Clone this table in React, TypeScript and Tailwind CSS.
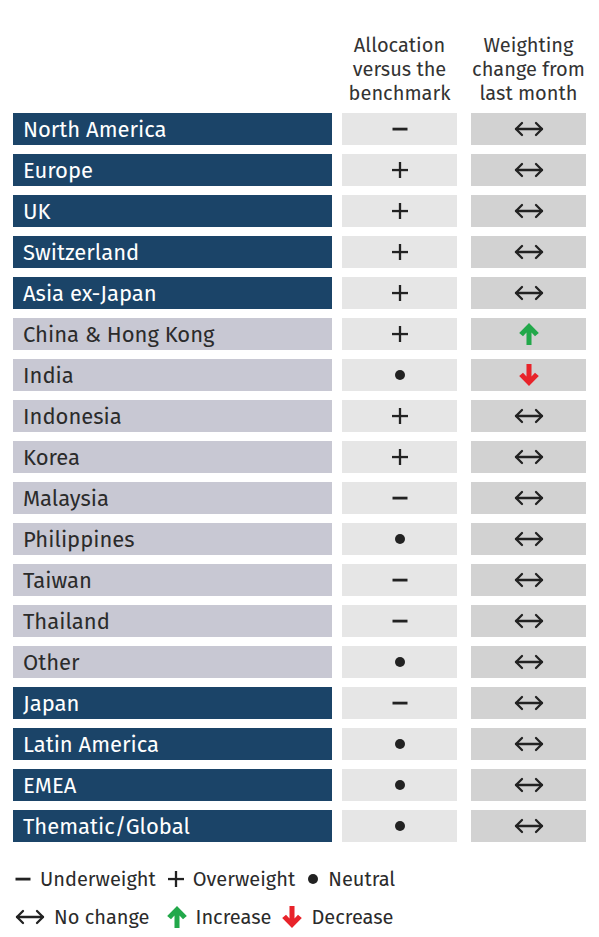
import React from "react";

type Row = { name: string; dark: boolean; alloc: "-" | "+" | "."; change: "n" | "u" | "d" };

const rows: Row[] = [
  { name: "North America", dark: true, alloc: "-", change: "n" },
  { name: "Europe", dark: true, alloc: "+", change: "n" },
  { name: "UK", dark: true, alloc: "+", change: "n" },
  { name: "Switzerland", dark: true, alloc: "+", change: "n" },
  { name: "Asia ex-Japan", dark: true, alloc: "+", change: "n" },
  { name: "China & Hong Kong", dark: false, alloc: "+", change: "u" },
  { name: "India", dark: false, alloc: ".", change: "d" },
  { name: "Indonesia", dark: false, alloc: "+", change: "n" },
  { name: "Korea", dark: false, alloc: "+", change: "n" },
  { name: "Malaysia", dark: false, alloc: "-", change: "n" },
  { name: "Philippines", dark: false, alloc: ".", change: "n" },
  { name: "Taiwan", dark: false, alloc: "-", change: "n" },
  { name: "Thailand", dark: false, alloc: "-", change: "n" },
  { name: "Other", dark: false, alloc: ".", change: "n" },
  { name: "Japan", dark: true, alloc: "-", change: "n" },
  { name: "Latin America", dark: true, alloc: ".", change: "n" },
  { name: "EMEA", dark: true, alloc: ".", change: "n" },
  { name: "Thematic/Global", dark: true, alloc: ".", change: "n" },
];

const Minus = () => (
  <svg width="16" height="16" viewBox="0 0 16 16"><rect x="0.5" y="6.7" width="15" height="2.8" fill="#222" /></svg>
);
const Plus = () => (
  <svg width="18" height="18" viewBox="0 0 18 18">
    <rect x="1" y="7.9" width="16" height="2.3" fill="#222" />
    <rect x="7.85" y="1" width="2.3" height="16" fill="#222" />
  </svg>
);
const Dot = () => (
  <svg width="12" height="12" viewBox="0 0 12 12"><circle cx="6" cy="6" r="5" fill="#222" /></svg>
);
const NoChange = () => (
  <svg width="32" height="16" viewBox="0 0 32 16" fill="none" stroke="#222" strokeWidth="2.3" strokeLinecap="round" strokeLinejoin="round">
    <path d="M3 8 H29" />
    <path d="M9 2 L3 8 L9 14" />
    <path d="M23 2 L29 8 L23 14" />
  </svg>
);
const Up = () => (
  <svg width="22" height="24" viewBox="0 0 20 22">
    <path d="M10 1 L19 10 L15.5 13 L12.3 9.6 V21 H7.7 V9.6 L4.5 13 L1 10 Z" fill="#22a84a" />
  </svg>
);
const Down = () => (
  <svg width="22" height="24" viewBox="0 0 20 22">
    <path d="M10 21 L19 12 L15.5 9 L12.3 12.4 V1 H7.7 V12.4 L4.5 9 L1 12 Z" fill="#e8232a" />
  </svg>
);

export default function App() {
  const font = { fontFamily: '"Fira Sans", "Noto Sans", "Open Sans", sans-serif' };
  return (
    <div className="w-[599px] h-[937px] bg-white text-[#2b2b2b]" style={font}>
      <div className="flex pt-[33px] pl-[336px] gap-[2px] text-[20px] leading-[24px] text-[#333] text-center">
        <div className="w-[127px]">Allocation<br />versus the<br />benchmark</div>
        <div className="w-[127px]">Weighting<br />change from<br />last month</div>
      </div>
      <div className="flex flex-col gap-[9px] mt-[8px] px-[13px]">
        {rows.map((r) => (
          <div key={r.name} className="flex h-[32px]">
            <div
              className={
                "w-[319px] flex items-center pl-[10px] text-[22px] " +
                (r.dark ? "bg-[#1b4468] text-white" : "bg-[#c8c8d3] text-[#2b2b2b]")
              }
            >
              {r.name}
            </div>
            <div className="w-[115px] ml-[10px] bg-[#e6e6e6] flex items-center justify-center">
              {r.alloc === "-" ? <Minus /> : r.alloc === "+" ? <Plus /> : <Dot />}
            </div>
            <div className="w-[115px] ml-[14px] bg-[#d2d2d2] flex items-center justify-center">
              {r.change === "n" ? <NoChange /> : r.change === "u" ? <Up /> : <Down />}
            </div>
          </div>
        ))}
      </div>
      <div className="mt-[25px] pl-[15px] text-[20px] text-[#2b2b2b] flex flex-col gap-[14px]">
        <div className="flex items-center h-[24px]">
          <Minus /><span className="ml-[9px]">Underweight</span>
          <span className="ml-[11px]"><Plus /></span><span className="ml-[8px]">Overweight</span>
          <span className="ml-[12px]"><Dot /></span><span className="ml-[9px]">Neutral</span>
        </div>
        <div className="flex items-center h-[24px]">
          <span className="-ml-[1px]"><NoChange /></span><span className="ml-[8px]">No change</span>
          <span className="ml-[16px]"><Up /></span><span className="ml-[8px]">Increase</span>
          <span className="ml-[10px]"><Down /></span><span className="ml-[8px]">Decrease</span>
        </div>
      </div>
    </div>
  );
}
